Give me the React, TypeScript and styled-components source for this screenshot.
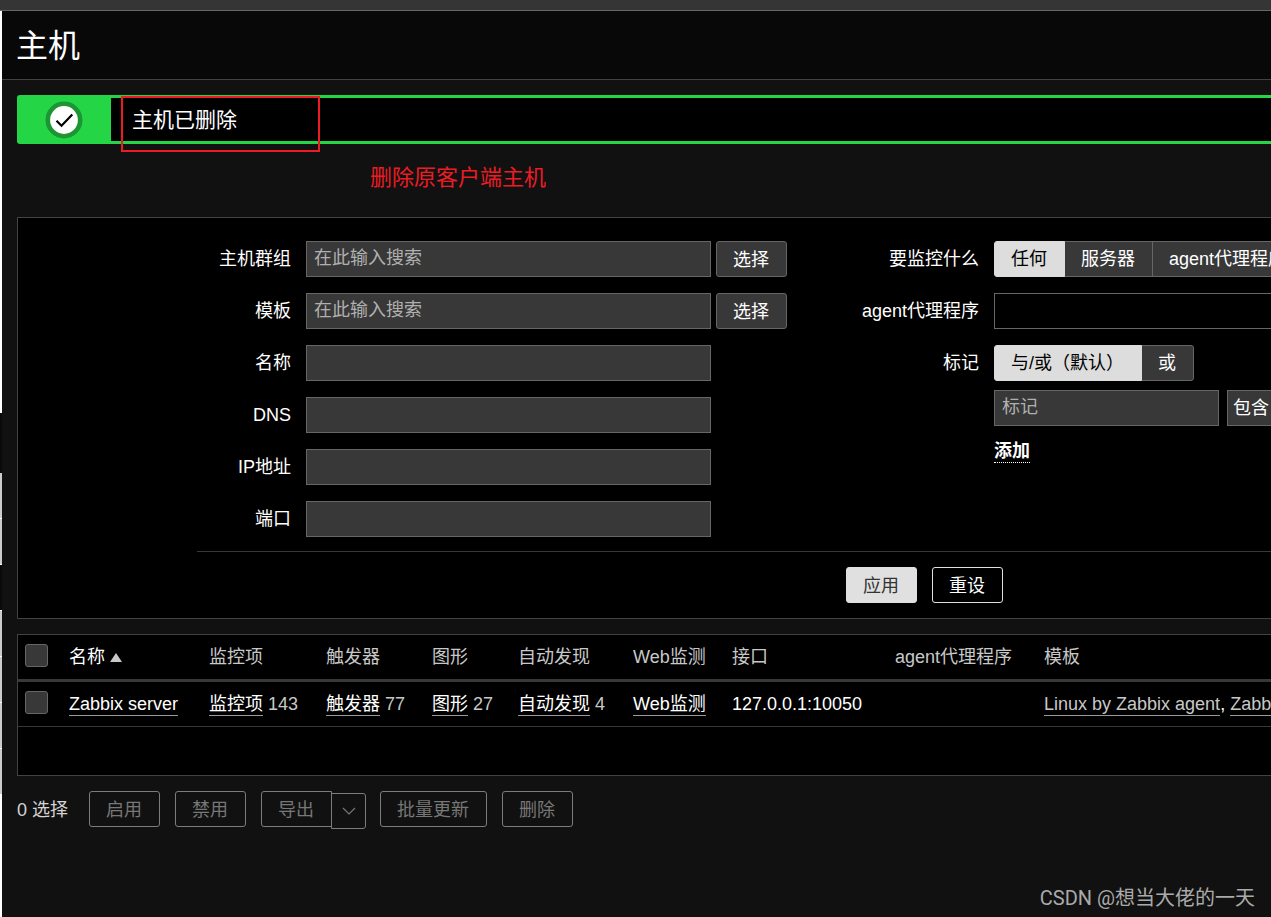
import React from "react";
import styled, { createGlobalStyle } from "styled-components";

const GlobalStyle = createGlobalStyle`
  *, *::before, *::after { box-sizing: border-box; }
  body {
    margin: 0;
    background: #111;
    color: #fff;
    font: 18px/24px "Liberation Sans", "Noto Sans CJK SC", sans-serif;
    overflow-x: hidden;
  }
  button, input, select { font: inherit; color: inherit; margin: 0; }
  a { color: inherit; text-decoration: none; }
`;

const Page = styled.div`
  position: relative;
  display: flex;
  flex-direction: column;
  min-height: 100vh;
  overflow: hidden;
`;
const TopBar = styled.div`
  height: 11px;
  background: #353535;
  border-bottom: 1px solid #666;
`;
const Body = styled.div`
  flex: 1;
  display: flex;
`;
const Edge = styled.div`
  flex: none;
  width: 2px;
  display: flex;
  flex-direction: column;
  background: #fff;
`;
const EdgePart = styled.div<{ $height: number; $fill: string }>`
  height: ${(p) => p.$height}px;
  background: ${(p) => p.$fill};
`;
const Main = styled.main`
  flex: 1;
  min-width: 0;
  background: #111;
`;
const Header = styled.header`
  height: 69px;
  padding: 2px 14px 0;
  display: flex;
  align-items: center;
  background: #080808;
  border-bottom: 1px solid #424242;
`;
const Title = styled.h1`
  margin: 0;
  font-size: 32px;
  line-height: 40px;
  font-weight: 400;
`;
const Content = styled.div`
  padding: 15px 0 0 15px;
`;
const Message = styled.output`
  position: relative;
  display: flex;
  height: 49px;
  background: #000;
  border: solid #24d645;
  border-width: 3px 0;
  border-radius: 3px 0 0 3px;
`;
const MessageIcon = styled.div`
  width: 94px;
  margin: -1px 0;
  display: grid;
  place-items: center;
  background: #24d645;
`;
const MessageText = styled.span`
  padding-left: 21px;
  font-size: 21px;
  line-height: 44px;
`;
const RedFrame = styled.div`
  position: absolute;
  left: 104px;
  top: -2px;
  width: 199px;
  height: 56px;
  border: 2px solid #ed1c24;
`;
const Note = styled.p`
  margin: 0;
  height: 73px;
  padding-left: 353px;
  font-size: 22px;
  line-height: 68px;
  color: #ed1c24;
`;
const Filter = styled.form`
  background: #000;
  border: 1px solid #424242;
  border-right: 0;
  padding: 23px 0 15px;
`;
const FilterColumns = styled.div`
  display: grid;
  grid-template-columns: 769px minmax(0, 1fr);
`;
const FieldRows = styled.div<{ $labels: number }>`
  display: grid;
  grid-template-columns: ${(p) => p.$labels}px minmax(0, 1fr);
  grid-auto-rows: min-content;
  gap: 16px 15px;
`;
const FieldLabel = styled.label`
  line-height: 36px;
  text-align: right;
  white-space: nowrap;
`;
const FieldName = styled.span`
  line-height: 36px;
  text-align: right;
  white-space: nowrap;
`;
const Controls = styled.div`
  display: flex;
  gap: 5px;
`;
const TextInput = styled.input<{ $width: number }>`
  width: ${(p) => p.$width}px;
  height: 36px;
  padding: 0 7px 1px;
  background: #383838;
  border: 1px solid #666;
  border-radius: 0;
  outline: 0;
  &::placeholder { color: #b0b0b0; opacity: 1; }
`;
const Select = styled.select<{ $width: string; $fill: string }>`
  appearance: none;
  flex: none;
  width: ${(p) => p.$width};
  height: 36px;
  padding: 0 5px 1px;
  background: ${(p) => p.$fill};
  border: 1px solid #666;
  border-right: 0;
  border-radius: 0;
`;
type Tone = "grey" | "solid" | "outline" | "muted";
const tones: Record<Tone, string> = {
  grey: "background:#383838;border-color:#666;color:#fff;",
  solid: "background:#e0e0e0;border-color:#e0e0e0;color:#333;",
  outline: "background:#000;border-color:#e0e0e0;color:#fff;",
  muted: "background:transparent;border-color:#7c7c7c;color:#777;",
};
const Button = styled.button<{ $tone: Tone }>`
  height: 36px;
  padding: 2px 17px 0 16px;
  line-height: 32px;
  white-space: nowrap;
  border: 1px solid;
  border-radius: 3px;
  ${(p) => tones[p.$tone]}
`;
const Segments = styled.div`
  display: flex;
  width: max-content;
`;
const Segment = styled.label`
  height: 36px;
  padding: 0 17px 0 16px;
  line-height: 34px;
  white-space: nowrap;
  background: #383838;
  border: 1px solid #666;
  & + & { margin-left: -1px; }
  &:first-child { border-radius: 3px 0 0 3px; }
  &:last-child { border-radius: 0 3px 3px 0; }
  &:has(input:checked) {
    position: relative;
    background: #ddd;
    border-color: #ddd;
    color: #000;
  }
  input {
    appearance: none;
    position: absolute;
    width: 0;
    height: 0;
    margin: 0;
  }
`;
const TagGroup = styled.div`
  display: grid;
  justify-items: start;
  row-gap: 9px;
`;
const TagRow = styled.div`
  display: flex;
  gap: 8px;
`;
const AddButton = styled.button`
  height: 24px;
  margin-top: 4px;
  padding: 0;
  font-weight: 700;
  line-height: 22px;
  background: none;
  border: 0;
  border-bottom: 1px dotted #fff;
`;
const FilterActions = styled.div`
  display: flex;
  gap: 15px;
  margin: 14px 0 0 179px;
  padding: 15px 0 0 649px;
  border-top: 1px solid #383838;
`;
const TableFrame = styled.div`
  margin-top: 15px;
  border: 1px solid #424242;
  border-right: 0;
  background: #000;
`;
const Table = styled.table`
  width: 100%;
  table-layout: fixed;
  border-collapse: collapse;
  white-space: nowrap;
  th, td {
    padding: 0 0 0 15px;
    text-align: left;
    font-weight: 400;
    overflow: hidden;
  }
  th { height: 45px; color: #c8c8c8; }
  thead tr { border-bottom: 3px solid #383838; }
  tbody td { height: 46px; padding-top: 1px; }
  tbody tr { border-bottom: 1px solid #383838; }
  tfoot td { height: 49px; }
  th:first-child, td:first-child { padding-left: 7px; }
`;
const Checkbox = styled.input`
  appearance: none;
  display: block;
  width: 23px;
  height: 23px;
  margin-bottom: 3px;
  background: #383838;
  border: 1px solid #666;
  border-radius: 3px;
`;
const SortLink = styled.a`
  display: inline-flex;
  align-items: center;
  gap: 5px;
  color: #fff;
`;
const Link = styled.a<{ $dim?: boolean }>`
  display: inline-block;
  line-height: 22px;
  color: ${(p) => (p.$dim ? "#c8c8c8" : "#fff")};
  border-bottom: 1px solid #999;
`;
const Count = styled.span`
  color: #c8c8c8;
`;
const ActionBar = styled.div`
  display: flex;
  align-items: flex-start;
  gap: 15px;
  margin-top: 15px;
`;
const Selected = styled.span`
  width: 57px;
  line-height: 38px;
  color: #d4d4d4;
  white-space: nowrap;
`;
const SplitButton = styled.div`
  display: flex;
  margin-right: -1px;
`;
const SplitMain = styled(Button)`
  border-radius: 3px 0 0 3px;
`;
const SplitMenu = styled(Button)`
  width: 35px;
  margin: 2px 0 0 -1px;
  padding: 0;
  display: grid;
  place-items: center;
  border-radius: 0 3px 3px 0;
`;
const Watermark = styled.div`
  position: absolute;
  right: 16px;
  bottom: 6px;
  font: 20px/26px Roboto, "Noto Sans CJK SC", sans-serif;
  color: #aaa;
`;

const leftFields = [
  { id: "groups", label: "主机群组", picker: true },
  { id: "templates", label: "模板", picker: true },
  { id: "name", label: "名称" },
  { id: "dns", label: "DNS" },
  { id: "ip", label: "IP地址" },
  { id: "port", label: "端口" },
];
const columns = ["监控项", "触发器", "图形", "自动发现", "Web监测", "接口", "agent代理程序", "模板"];
const widths = [36, 140, 117, 106, 86, 115, 99, 163, 149];
const counted: [string, string][] = [
  ["监控项", "143"],
  ["触发器", "77"],
  ["图形", "27"],
  ["自动发现", "4"],
];

function Radios({ name, options }: { name: string; options: string[] }) {
  return (
    <Segments role="radiogroup">
      {options.map((text, i) => (
        <Segment key={text}>
          <input type="radio" name={name} defaultChecked={i === 0} />
          {text}
        </Segment>
      ))}
    </Segments>
  );
}

export default function App() {
  return (
    <>
      <GlobalStyle />
      <Page>
        <TopBar />
        <Body>
          <Edge>
            <EdgePart $height={402} $fill="#fff" />
            <EdgePart $height={60} $fill="#0a0a0a" />
            <EdgePart $height={92} $fill="repeating-linear-gradient(#ccc 0 45px, #fff 45px 46px)" />
            <EdgePart $height={45} $fill="#0a0a0a" />
            <EdgePart $height={184} $fill="repeating-linear-gradient(#fff 0 1px, #ccc 1px 46px)" />
          </Edge>
          <Main>
            <Header>
              <Title>主机</Title>
            </Header>
            <Content>
              <Message>
                <MessageIcon>
                  <svg width="38" height="38" viewBox="0 0 38 38" aria-hidden="true">
                    <circle cx="19" cy="19" r="16.2" fill="#fff" stroke="#1c9632" strokeWidth="4.6" />
                    <path d="M11.5 19.8l5 5L27.3 13.5" fill="none" stroke="#000" strokeWidth="2.2" />
                  </svg>
                </MessageIcon>
                <MessageText>主机已删除</MessageText>
                <RedFrame />
              </Message>
              <Note>删除原客户端主机</Note>

              <Filter onSubmit={(e) => e.preventDefault()}>
                <FilterColumns>
                  <FieldRows $labels={273}>
                    {leftFields.map((f) => (
                      <React.Fragment key={f.id}>
                        <FieldLabel htmlFor={f.id}>{f.label}</FieldLabel>
                        <Controls>
                          <TextInput id={f.id} $width={405} placeholder={f.picker ? "在此输入搜索" : undefined} />
                          {f.picker && (
                            <Button type="button" $tone="grey">
                              选择
                            </Button>
                          )}
                        </Controls>
                      </React.Fragment>
                    ))}
                  </FieldRows>
                  <FieldRows $labels={192}>
                    <FieldName>要监控什么</FieldName>
                    <Radios name="monitored" options={["任何", "服务器", "agent代理程序"]} />
                    <FieldLabel htmlFor="proxy">agent代理程序</FieldLabel>
                    <Select id="proxy" $width="100%" $fill="#000" />
                    <FieldName>标记</FieldName>
                    <TagGroup>
                      <Radios name="evaltype" options={["与/或（默认）", "或"]} />
                      <TagRow>
                        <TextInput aria-label="标记" placeholder="标记" $width={225} />
                        <Select aria-label="运算符" $width="120px" $fill="#383838">
                          <option>包含</option>
                        </Select>
                      </TagRow>
                      <AddButton type="button">添加</AddButton>
                    </TagGroup>
                  </FieldRows>
                </FilterColumns>
                <FilterActions>
                  <Button $tone="solid">应用</Button>
                  <Button type="reset" $tone="outline">
                    重设
                  </Button>
                </FilterActions>
              </Filter>

              <TableFrame>
                <Table>
                  <colgroup>
                    {widths.map((w, i) => (
                      <col key={i} width={w} />
                    ))}
                    <col />
                  </colgroup>
                  <thead>
                    <tr>
                      <th>
                        <Checkbox type="checkbox" aria-label="全选" />
                      </th>
                      <th>
                        <SortLink href="#name">
                          名称
                          <svg width="12" height="10" viewBox="0 0 12 10" aria-hidden="true">
                            <path d="M6 1l6 9H0z" fill="#c8c8c8" />
                          </svg>
                        </SortLink>
                      </th>
                      {columns.map((c) => (
                        <th key={c}>{c}</th>
                      ))}
                    </tr>
                  </thead>
                  <tbody>
                    <tr>
                      <td>
                        <Checkbox type="checkbox" aria-label="Zabbix server" />
                      </td>
                      <td>
                        <Link href="#host">Zabbix server</Link>
                      </td>
                      {counted.map(([text, n]) => (
                        <td key={text}>
                          <Link href="#list">{text}</Link> <Count>{n}</Count>
                        </td>
                      ))}
                      <td>
                        <Link href="#web">Web监测</Link>
                      </td>
                      <td>127.0.0.1:10050</td>
                      <td />
                      <td>
                        <Link href="#linux" $dim>
                          Linux by Zabbix agent
                        </Link>
                        ,{" "}
                        <Link href="#health" $dim>
                          Zabbix server health
                        </Link>
                      </td>
                    </tr>
                  </tbody>
                  <tfoot>
                    <tr>
                      <td colSpan={10} />
                    </tr>
                  </tfoot>
                </Table>
              </TableFrame>

              <ActionBar>
                <Selected>0 选择</Selected>
                <Button $tone="muted">启用</Button>
                <Button $tone="muted">禁用</Button>
                <SplitButton>
                  <SplitMain $tone="muted">导出</SplitMain>
                  <SplitMenu $tone="muted" aria-label="导出格式">
                    <svg width="14" height="8" viewBox="0 0 14 8" aria-hidden="true">
                      <path d="M1 1l6 6 6-6" fill="none" stroke="#777" strokeWidth="1.2" />
                    </svg>
                  </SplitMenu>
                </SplitButton>
                <Button $tone="muted">批量更新</Button>
                <Button $tone="muted">删除</Button>
              </ActionBar>
            </Content>
          </Main>
        </Body>
        <Watermark>CSDN @想当大佬的一天</Watermark>
      </Page>
    </>
  );
}
